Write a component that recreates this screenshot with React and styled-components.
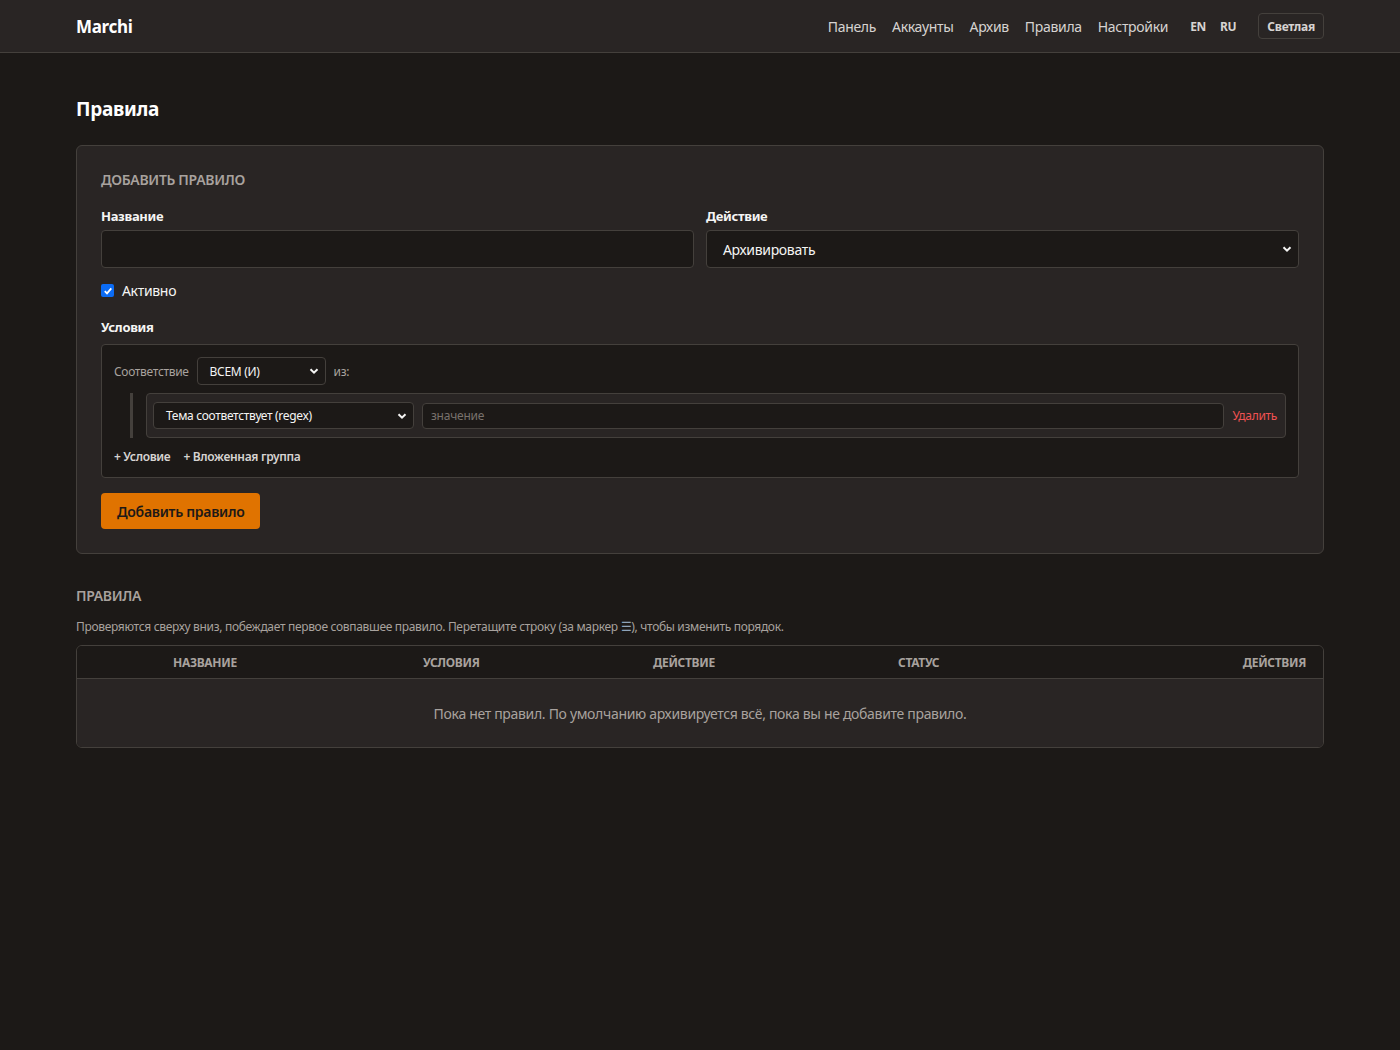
import React from 'react';
import styled, { createGlobalStyle } from 'styled-components';

const colors = {
  page: '#1c1917',
  card: '#292524',
  border: '#44403c',
  text: '#f5f5f4',
  soft: '#d6d3d1',
  muted: '#a8a29e',
  accent: '#e07300',
  danger: '#f05252',
};

const tracking = '-0.02em';

const GlobalStyle = createGlobalStyle`
  body {
    margin: 0;
    background: ${colors.page};
    color: ${colors.text};
    font-family: "Noto Sans", "Open Sans", sans-serif;
    letter-spacing: ${tracking};
  }
  * { box-sizing: border-box; }
`;

const Header = styled.header`
  height: 53px;
  background: ${colors.card};
  border-bottom: 1px solid ${colors.border};
`;

const Container = styled.div`
  max-width: 1280px;
  margin: 0 auto;
  padding: 0 16px;
`;

const HeaderInner = styled(Container)`
  display: flex;
  align-items: center;
  height: 100%;
`;

const Logo = styled.div`
  font-size: 17px;
  font-weight: 700;
  color: #fff;
`;

const Nav = styled.nav`
  margin-left: auto;
  display: flex;
  align-items: center;
  gap: 16px;
`;

const NavLink = styled.a`
  font-size: 14px;
  color: ${colors.soft};
  text-decoration: none;
`;

const Lang = styled.div`
  display: flex;
  gap: 14px;
  margin-left: 6px;
  margin-right: 6px;
`;

const LangLink = styled.span`
  font-size: 12px;
  font-weight: 700;
  color: ${colors.soft};
`;

const ThemeButton = styled.button`
  height: 26px;
  padding: 0 8px;
  background: transparent;
  border: 1px solid ${colors.border};
  border-radius: 4px;
  color: ${colors.soft};
  font: 700 12px "Noto Sans", sans-serif;
  letter-spacing: ${tracking};
`;

const Main = styled(Container)`
  padding-top: 44px;
`;

const PageTitle = styled.h1`
  margin: 0 0 24px;
  font-size: 19px;
  font-weight: 700;
  color: #fff;
  line-height: 24px;
`;

const Card = styled.section`
  background: ${colors.card};
  border: 1px solid ${colors.border};
  border-radius: 6px;
  padding: 24px;
`;

const SectionTitle = styled.h2`
  margin: ${({ $flush }) => ($flush ? '0 0 12px' : '0 0 17px')};
  font-size: 14px;
  font-weight: 600;
  text-transform: uppercase;
  color: ${colors.muted};
  line-height: 20px;
`;

const FieldGrid = styled.div`
  display: grid;
  grid-template-columns: 1fr 1fr;
  gap: 12px;
`;

const Field = styled.label`
  display: flex;
  flex-direction: column;
  gap: 5px;
`;

const Label = styled.span`
  font-size: 13px;
  font-weight: 700;
  color: ${colors.text};
  line-height: 18px;
`;

const TextInput = styled.input`
  height: ${({ $small }) => ($small ? '26px' : '38px')};
  width: 100%;
  background: ${colors.page};
  border: 1px solid ${colors.border};
  border-radius: 4px;
  color: ${colors.text};
  padding: 0 ${({ $small }) => ($small ? '8px' : '16px')};
  font: ${({ $small }) => ($small ? '12px' : '14px')} "Noto Sans", sans-serif;
  letter-spacing: ${tracking};
  &::placeholder { color: #78716c; }
`;

const SelectBox = styled.div`
  display: flex;
  align-items: center;
  height: ${({ $h }) => $h}px;
  width: ${({ $w }) => ($w ? `${$w}px` : '100%')};
  flex: none;
  background: ${colors.page};
  border: 1px solid ${colors.border};
  border-radius: 4px;
  color: ${colors.text};
  padding: 0 ${({ $pad }) => $pad}px;
  font-size: ${({ $fs }) => $fs}px;
  svg {
    margin-left: auto;
    margin-right: -${({ $pad }) => $pad - 6}px;
  }
`;

const Chevron = () => (
  <svg width="10" height="10" viewBox="0 0 10 10">
    <path d="M1.5 3.2 L5 6.7 L8.5 3.2" fill="none" stroke="#f5f5f4" strokeWidth="2" />
  </svg>
);

const CheckRow = styled.label`
  display: flex;
  align-items: center;
  gap: 8px;
  margin: 13px 0 15px;
  font-size: 14px;
  color: ${colors.text};
`;

const CheckBox = styled.span`
  width: 13px;
  height: 13px;
  border-radius: 2px;
  background: #0b6cf5;
  display: flex;
  align-items: center;
  justify-content: center;
`;

const GroupBox = styled.div`
  margin-top: 7px;
  background: ${colors.page};
  border: 1px solid ${colors.border};
  border-radius: 4px;
  padding: 12px;
`;

const MatchRow = styled.div`
  display: flex;
  align-items: center;
  gap: 8px;
  font-size: 12px;
  color: ${colors.muted};
`;

const Nested = styled.div`
  margin: 8px 0 0 16px;
  padding-left: 13px;
  border-left: 3px solid ${colors.border};
`;

const ConditionRow = styled.div`
  display: flex;
  align-items: center;
  gap: 8px;
  background: ${colors.card};
  border: 1px solid ${colors.border};
  border-radius: 4px;
  padding: 8px 8px 8px 6px;
`;

const DeleteLink = styled.span`
  font-size: 12px;
  color: ${colors.danger};
`;

const AddLinks = styled.div`
  display: flex;
  gap: 13px;
  margin-top: 10px;
  font-size: 12px;
  font-weight: 600;
  color: ${colors.soft};
`;

const PrimaryButton = styled.button`
  margin-top: 15px;
  height: 36px;
  padding: 0 16px;
  background: ${colors.accent};
  border: none;
  border-radius: 4px;
  color: ${colors.page};
  font: 600 14px "Noto Sans", sans-serif;
  letter-spacing: ${tracking};
`;

const RulesSection = styled.section`
  margin-top: 32px;
`;

const Hint = styled.p`
  margin: 0 0 10px;
  font-size: 12px;
  color: ${colors.muted};
`;

const Marker = styled.span`
  color: #8fa3b8;
`;

const Table = styled.div`
  border: 1px solid ${colors.border};
  border-radius: 6px;
  overflow: hidden;
`;

const HeadRow = styled.div`
  display: grid;
  grid-template-columns: 84px 250px 230px 245px 200px 1fr;
  height: 33px;
  align-items: center;
  background: ${colors.page};
  border-bottom: 1px solid ${colors.border};
`;

const HeadCell = styled.div`
  padding: 0 17px 0 12px;
  font-size: 12px;
  font-weight: 700;
  text-transform: uppercase;
  color: ${colors.muted};
  text-align: ${({ $right }) => ($right ? 'right' : 'left')};
`;

const EmptyRow = styled.div`
  height: 68px;
  display: flex;
  align-items: center;
  justify-content: center;
  background: ${colors.card};
  font-size: 14px;
  color: ${colors.muted};
`;

const navItems = ['Панель', 'Аккаунты', 'Архив', 'Правила', 'Настройки'];
const columns = ['', 'Название', 'Условия', 'Действие', 'Статус', 'Действия'];

export default function App() {
  return (
    <>
      <GlobalStyle />
      <Header>
        <HeaderInner>
          <Logo>Marchi</Logo>
          <Nav>
            {navItems.map((item) => (
              <NavLink key={item} href="#">{item}</NavLink>
            ))}
            <Lang>
              <LangLink>EN</LangLink>
              <LangLink>RU</LangLink>
            </Lang>
            <ThemeButton type="button">Светлая</ThemeButton>
          </Nav>
        </HeaderInner>
      </Header>
      <Main>
        <PageTitle>Правила</PageTitle>
        <Card>
          <SectionTitle>Добавить правило</SectionTitle>
          <FieldGrid>
            <Field>
              <Label>Название</Label>
              <TextInput />
            </Field>
            <Field>
              <Label>Действие</Label>
              <SelectBox $h={38} $pad={16} $fs={14}>
                Архивировать
                <Chevron />
              </SelectBox>
            </Field>
          </FieldGrid>
          <CheckRow>
            <CheckBox>
              <svg width="10" height="10" viewBox="0 0 10 10">
                <path d="M1.8 5.2 L4 7.4 L8.3 2.4" fill="none" stroke="#fff" strokeWidth="1.8" />
              </svg>
            </CheckBox>
            Активно
          </CheckRow>
          <Label>Условия</Label>
          <GroupBox>
            <MatchRow>
              Соответствие
              <SelectBox $h={28} $w={129} $pad={12} $fs={12}>
                ВСЕМ (И)
                <Chevron />
              </SelectBox>
              из:
            </MatchRow>
            <Nested>
              <ConditionRow>
                <SelectBox $h={27} $w={261} $pad={12} $fs={12}>
                  Тема соответствует (regex)
                  <Chevron />
                </SelectBox>
                <TextInput $small placeholder="значение" />
                <DeleteLink>Удалить</DeleteLink>
              </ConditionRow>
            </Nested>
            <AddLinks>
              <span>+ Условие</span>
              <span>+ Вложенная группа</span>
            </AddLinks>
          </GroupBox>
          <PrimaryButton type="button">Добавить правило</PrimaryButton>
        </Card>
        <RulesSection>
          <SectionTitle $flush>Правила</SectionTitle>
          <Hint>
            Проверяются сверху вниз, побеждает первое совпавшее правило. Перетащите строку (за маркер <Marker>☰</Marker>), чтобы изменить порядок.
          </Hint>
          <Table>
            <HeadRow>
              {columns.map((col, i) => (
                <HeadCell key={i} $right={i === columns.length - 1}>{col}</HeadCell>
              ))}
            </HeadRow>
            <EmptyRow>Пока нет правил. По умолчанию архивируется всё, пока вы не добавите правило.</EmptyRow>
          </Table>
        </RulesSection>
      </Main>
    </>
  );
}
